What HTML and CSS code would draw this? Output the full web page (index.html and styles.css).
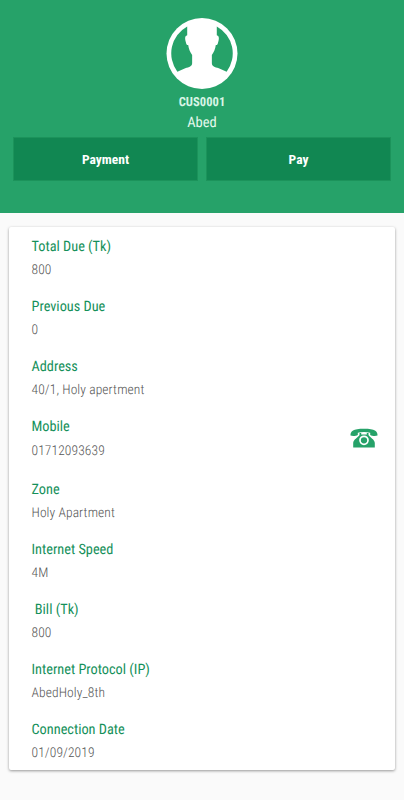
FILE: index.html
```html
<!DOCTYPE html>
<html lang="en">
<head>
<meta charset="utf-8">
<title>Customer</title>
<link rel="stylesheet" href="styles.css">
</head>
<body>
<header class="profile">
  <svg class="avatar" viewBox="0 0 72 72">
    <circle cx="36" cy="36" r="36" fill="#fff"/>
    <path d="M21 8.500V17.500C18.600 18 18.500 21 19.500 24C20 26.500 20.500 27.500 22 27.500C22.500 31.500 24 35 26 37.500V46C26 49 23 50 19 51L11 54.500A31.200 31.200 0 0 1 21 8.500Z" fill="#26a269"/>
    <path d="M51 8.500V17.500C53.400 18 53.500 21 52.500 24C52 26.500 51.500 27.500 50 27.500C49.500 31.500 48 35 46 37.500V46C46 49 49 50 53 51L61 54.500A31.200 31.200 0 0 0 51 8.500Z" fill="#26a269"/>
  </svg>
  <div class="code"><span>CUS0001</span></div>
  <div class="name"><span>Abed</span></div>
  <nav class="actions">
    <button class="action"><span>Payment</span></button>
    <button class="action"><span>Pay</span></button>
  </nav>
</header>
<main class="card">
  <section class="field"><h2>Total Due (Tk)</h2><p>800</p></section>
  <section class="field"><h2>Previous Due</h2><p>0</p></section>
  <section class="field"><h2>Address</h2><p>40/1, Holy apertment</p></section>
  <section class="field field-phone">
    <div><h2>Mobile</h2><p>01712093639</p></div>
    <svg class="phone" viewBox="0 0 28 20">
      <path d="M0.500 7.500C0.300 3.500 3 0.800 14 0.800S27.700 3.500 27.500 7.500C25.500 8.300 22 8 20.200 7V4.800C16 3.700 12 3.700 7.800 4.800V7C6 8 2.500 8.300 0.500 7.500Z"/>
      <path d="M9.500 5H11.200V6.500H16.800V5H18.500V7C20 9.500 24.800 11.500 24.800 15V19.500H3.200V15C3.200 11.500 8 9.500 9.500 7Z"/>
      <circle cx="14" cy="12.300" r="4" fill="none" stroke="#fff" stroke-width="1.700"/>
    </svg>
  </section>
  <section class="field"><h2>Zone</h2><p>Holy Apartment</p></section>
  <section class="field"><h2>Internet Speed</h2><p>4M</p></section>
  <section class="field"><h2>&nbsp;Bill (Tk)</h2><p>800</p></section>
  <section class="field"><h2>Internet Protocol (IP)</h2><p>AbedHoly_8th</p></section>
  <section class="field"><h2>Connection Date</h2><p>01/09/2019</p></section>
</main>
</body>
</html>
```
FILE: styles.css
```css
* { box-sizing: border-box; }
body {
  margin: 0;
  min-height: 800px;
  background: #fafafa;
  font-family: "Roboto Condensed", Roboto, sans-serif;
  font-stretch: 75%;
  text-rendering: geometricPrecision;
}
.profile {
  height: 213px;
  padding: 18px 13px 0;
  background: #26a269;
  color: #fff;
  text-align: center;
}
.avatar { display: block; width: 72px; height: 71px; margin: 0 auto; }
.code { height: 20px; margin-top: 4px; font-size: 12.500px; font-weight: 700; line-height: 20px; letter-spacing: 0.050px; color: #d9f5e6; }
.name { height: 20px; font-size: 14.500px; line-height: 20px; color: #e4f8ed; }
.actions { display: flex; gap: 8px; margin-top: 4px; }
.action {
  flex: 1;
  height: 44px;
  border: 1px solid #1c935b;
  background: #118752;
  color: #fff;
  font: inherit;
  font-size: 13.500px;
  font-weight: 700;
}
.card {
  height: 543px;
  margin: 14px 9px 0;
  padding: 9px 17px 0 22.500px;
  border-radius: 2px;
  background: #fff;
  box-shadow: 0 1px 3px rgba(0, 0, 0, 0.4);
}
.field { height: 60.150px; }
.field-phone { display: flex; justify-content: space-between; height: 62.300px; }
.field h2 { margin: 0; font-size: 14.300px; font-weight: 400; line-height: 22px; color: #15905a; }
.field p { margin: 1.100px 0 0; font-size: 13.500px; font-weight: 300; line-height: 22px; letter-spacing: 0.100px; color: #555; }
.phone { width: 28px; height: 20px; margin-top: 12px; fill: #26a269; }
```
